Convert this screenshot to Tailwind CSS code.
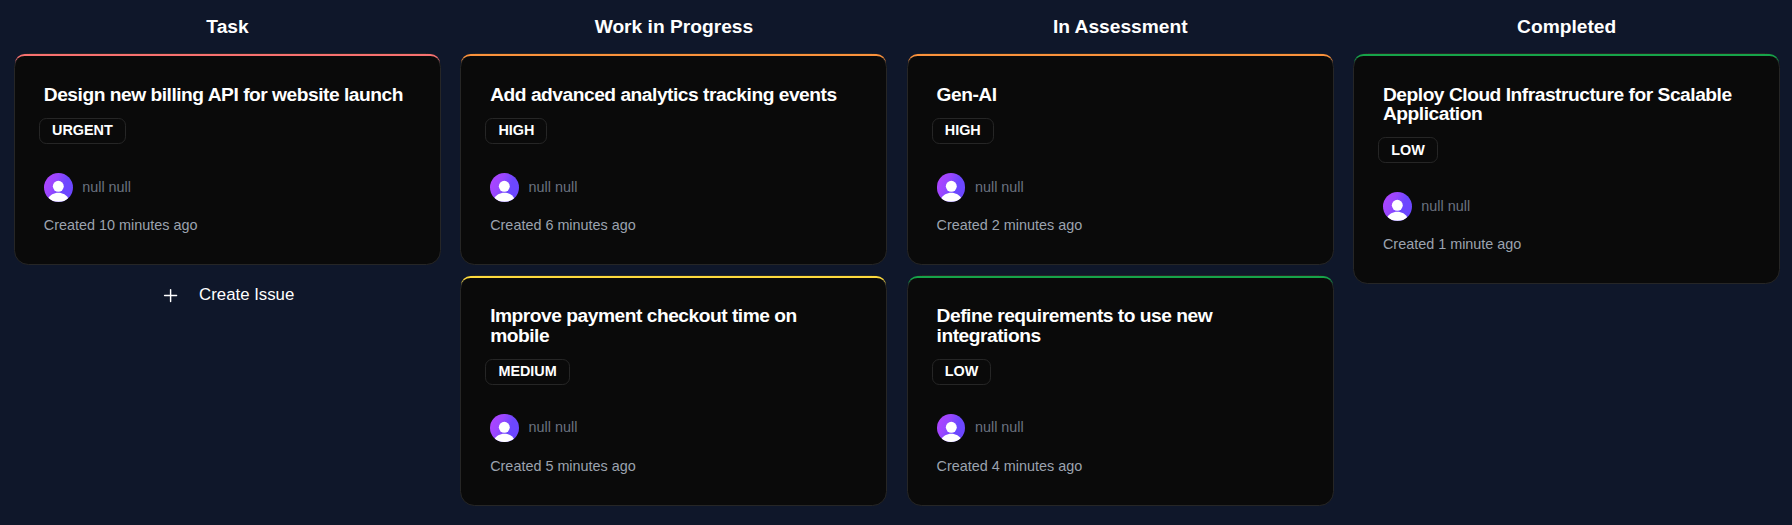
<!DOCTYPE html>
<html lang="en">
<head>
<meta charset="utf-8">
<title>Board</title>
<script src="https://cdn.jsdelivr.net/npm/@tailwindcss/browser@4"></script>
</head>
<body class="bg-[#0f172a] h-screen overflow-hidden text-white font-['Liberation_Sans',Arial,sans-serif]">
<main id="board" class="grid grid-cols-4 gap-[19.4px] ml-[14px] w-[1766.2px] pt-[13px]"></main>
<template id="card">
  <article class="rounded-[14.4px] border border-[#262626] bg-[#0a0a0a]">
    <div class="accent rounded-[9.6px] border-t-2 px-[28.8px] pt-[28.8px] pb-[28.8px]">
      <h3 class="text-[19.2px] leading-[19.2px] font-semibold tracking-tight"></h3>
      <span class="badge mt-[14px] -ml-[4.8px] flex w-fit rounded-[7.2px] border border-[#262626] px-[12px] py-[2.4px] text-[14.4px] leading-[19.2px] font-semibold"></span>
      <div class="mt-[28.8px] flex items-center gap-[9.6px] text-[14.4px] leading-[19.2px] text-[#6b7280]">
        <div class="size-[28.8px] shrink-0 overflow-hidden rounded-full bg-[linear-gradient(115deg,#b143ff_5%,#9a47ff_35%,#6c47ff_62%,#6c47ff_100%)]">
          <svg class="size-full" viewBox="0 0 29 29" fill="#fff"><circle cx="14.4" cy="13.4" r="5.5"/><path d="M4 26.200C6 22.100 10 19.900 14.400 19.900S22.800 22.100 24.800 26.200L22 29H7Z"/></svg>
        </div>
        <span>null null</span>
      </div>
      <p class="time mt-[14.4px] text-[14.4px] leading-[19.2px] text-[#9ca3af]"></p>
    </div>
  </article>
</template>
<template id="create">
  <button class="mt-[1.2px] flex h-[38.4px] w-full items-center justify-center gap-[19.2px] text-[16.8px] leading-[24px]">
    <svg class="mt-px size-[19.2px]" viewBox="0 0 24 24" fill="none" stroke="currentColor" stroke-width="1.8" stroke-linecap="round"><path d="M4.500 12h15M12 4.500v15"/></svg>Create Issue
  </button>
</template>
<script>
const accents = {URGENT:'border-t-[#f87171]', HIGH:'border-t-[#fb923c]', MEDIUM:'border-t-[#fdda3e]', LOW:'border-t-[#16a34a]'};
const data = [
  ['Task', [['Design new billing API for website launch','URGENT','10 minutes']]],
  ['Work in Progress', [['Add advanced analytics tracking events','HIGH','6 minutes'],['Improve payment checkout time on mobile','MEDIUM','5 minutes']]],
  ['In Assessment', [['Gen-AI','HIGH','2 minutes'],['Define requirements to use new integrations','LOW','4 minutes']]],
  ['Completed', [['Deploy Cloud Infrastructure for Scalable Application','LOW','1 minute']]]
];
for (const [name, cards] of data) {
  const col = document.createElement('section');
  col.innerHTML = '<h2 class="mb-[11.2px] text-center text-[19.2px] leading-[28.8px] font-semibold"></h2><div class="flex flex-col gap-[9.6px]"></div>';
  col.firstChild.textContent = name;
  for (const [title, priority, age] of cards) {
    const c = document.getElementById('card').content.cloneNode(true);
    c.querySelector('.accent').classList.add(accents[priority]);
    c.querySelector('h3').textContent = title;
    c.querySelector('.badge').textContent = priority;
    c.querySelector('.time').textContent = `Created ${age} ago`;
    col.lastChild.append(c);
  }
  if (name === 'Task') col.lastChild.append(document.getElementById('create').content.cloneNode(true));
  document.getElementById('board').append(col);
}
</script>
</body>
</html>
